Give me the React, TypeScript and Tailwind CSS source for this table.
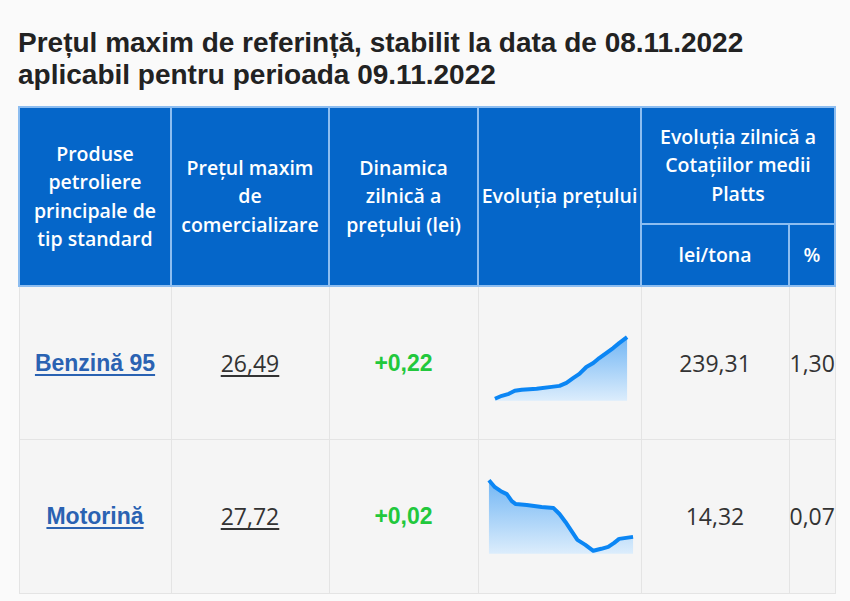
import React from "react";

const head = "font-['Open_Sans','Noto_Sans',sans-serif] font-semibold text-white text-[19.5px] leading-[28.5px] text-center align-middle border-2 border-[#8dbdf0] bg-[#0566c9]";
const cell = "bg-[#f5f5f5] border border-[#e4e4e4] text-center align-middle p-0 overflow-hidden";

function Spark({ vb, line, base, id }: { vb: string; line: [number, number][]; base: number; id: string }) {
  const d = line.map((p, i) => `${i ? "L" : "M"}${p[0]} ${p[1]}`).join(" ");
  const first = line[0];
  const last = line[line.length - 1];
  const fill = `${d} L${last[0]} ${base} L${first[0]} ${base} Z`;
  return (
    <svg viewBox={vb} width="100%" height="100%" className="block">
      <defs>
        <linearGradient id={id} x1="0" y1="0" x2="0" y2="1">
          <stop offset="0" stopColor="#72b6f4" />
          <stop offset="1" stopColor="#dcedfc" />
        </linearGradient>
      </defs>
      <path d={fill} fill={`url(#${id})`} />
      <path d={d} fill="none" stroke="#0b86f4" strokeWidth="4" strokeLinejoin="round" strokeLinecap="butt" />
    </svg>
  );
}

const line1: [number, number][] = [
  [493, 398], [500, 395], [507, 393], [513, 390], [520, 389], [535, 388], [550, 386], [558, 385], [565, 382], [572, 377], [578, 373], [585, 366], [592, 362], [598, 357], [605, 352], [612, 347], [618, 342], [626, 336],
];
const line2: [number, number][] = [
  [487, 479], [493, 486], [499, 490], [505, 493], [510, 500], [514, 503], [525, 504], [540, 506], [552, 507], [558, 513], [564, 521], [570, 530], [576, 539], [584, 544], [592, 550], [600, 548], [607, 546], [613, 542], [618, 538], [625, 537], [632, 536],
];

export default function App() {
  return (
    <div className="w-[850px] h-[601px] bg-[#fafafa] overflow-hidden">
      <div className="pt-[27px] pl-[18px]">
        <h1 className="font-['Liberation_Sans',Arial,sans-serif] font-bold text-[28px] leading-[32px] text-[#222]">
          Prețul maxim de referință, stabilit la data de 08.11.2022
          <br />
          aplicabil pentru perioada 09.11.2022
        </h1>
        <table className="mt-[15px] table-fixed border-collapse w-[816px]">
          <colgroup>
            <col className="w-[152px]" />
            <col className="w-[158px]" />
            <col className="w-[149px]" />
            <col className="w-[163px]" />
            <col className="w-[148px]" />
            <col className="w-[46px]" />
          </colgroup>
          <thead>
            <tr className="h-[117px]">
              <th rowSpan={2} className={head + " px-2"}>Produse petroliere principale de tip standard</th>
              <th rowSpan={2} className={head + " px-1"}>Prețul maxim de comercializare</th>
              <th rowSpan={2} className={head + " px-3"}>Dinamica zilnică a prețului (lei)</th>
              <th rowSpan={2} className={head + " whitespace-nowrap p-0"}>Evoluția prețului</th>
              <th colSpan={2} className={head + " px-3"}>Evoluția zilnică a Cotațiilor medii Platts</th>
            </tr>
            <tr className="h-[62px]">
              <th className={head}>lei/tona</th>
              <th className={head}>%</th>
            </tr>
          </thead>
          <tbody>
            <tr className="h-[152px]">
              <td className={cell}>
                <a href="#" className="font-['Liberation_Sans',Arial,sans-serif] font-bold text-[23px] text-[#2a62b2] underline underline-offset-[3px]">Benzină 95</a>
              </td>
              <td className={cell}>
                <span className="font-['Open_Sans',sans-serif] text-[23px] text-[#333] underline underline-offset-[3px]">26,49</span>
              </td>
              <td className={cell}>
                <span className="font-['Liberation_Sans',Arial,sans-serif] font-bold text-[23px] text-[#22c83c]">+0,22</span>
              </td>
              <td className={cell + " h-[152px]"}>
                <div className="h-[152px]">
                  <Spark vb="477 286 163 152" line={line1} base={400} id="g1" />
                </div>
              </td>
              <td className={cell}>
                <span className="font-['Open_Sans',sans-serif] text-[23px] text-[#333]">239,31</span>
              </td>
              <td className={cell}>
                <span className="font-['Open_Sans',sans-serif] text-[23px] text-[#333] whitespace-nowrap">1,30</span>
              </td>
            </tr>
            <tr className="h-[153px]">
              <td className={cell}>
                <a href="#" className="font-['Liberation_Sans',Arial,sans-serif] font-bold text-[23px] text-[#2a62b2] underline underline-offset-[3px]">Motorină</a>
              </td>
              <td className={cell}>
                <span className="font-['Open_Sans',sans-serif] text-[23px] text-[#333] underline underline-offset-[3px]">27,72</span>
              </td>
              <td className={cell}>
                <span className="font-['Liberation_Sans',Arial,sans-serif] font-bold text-[23px] text-[#22c83c]">+0,02</span>
              </td>
              <td className={cell + " h-[153px]"}>
                <div className="h-[153px]">
                  <Spark vb="477 439 163 153" line={line2} base={553} id="g2" />
                </div>
              </td>
              <td className={cell}>
                <span className="font-['Open_Sans',sans-serif] text-[23px] text-[#333]">14,32</span>
              </td>
              <td className={cell}>
                <span className="font-['Open_Sans',sans-serif] text-[23px] text-[#333] whitespace-nowrap">0,07</span>
              </td>
            </tr>
          </tbody>
        </table>
      </div>
    </div>
  );
}
